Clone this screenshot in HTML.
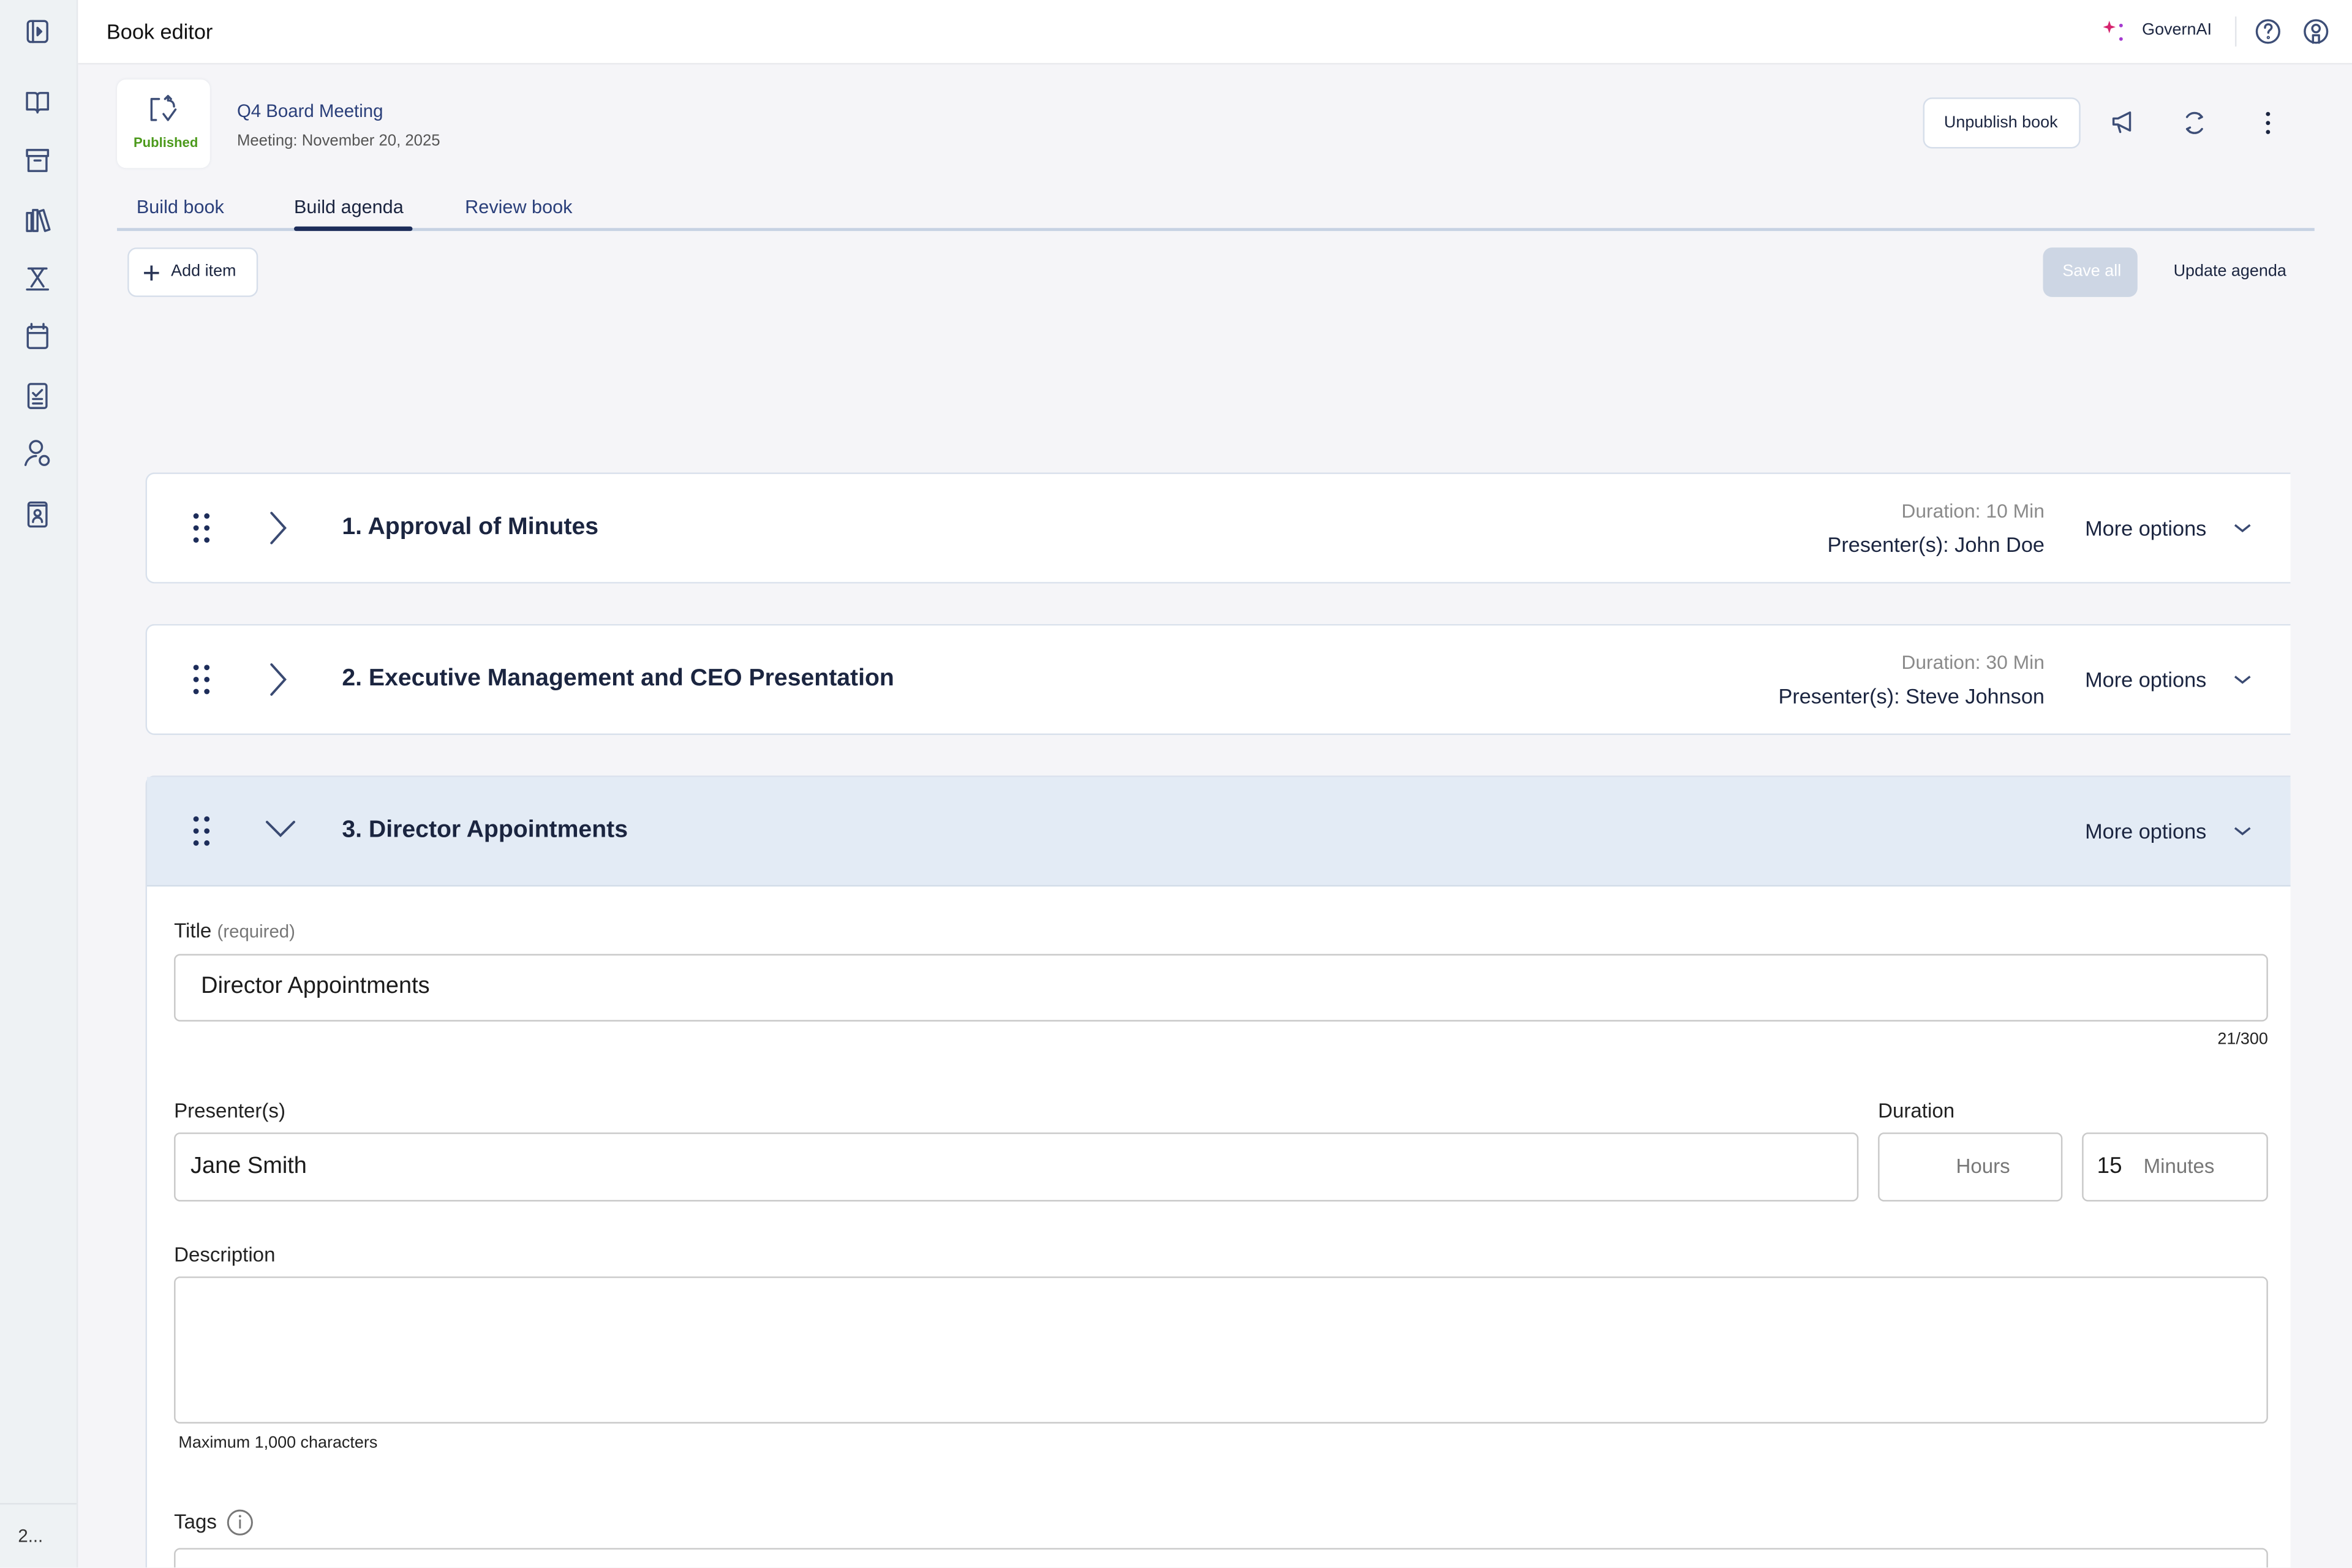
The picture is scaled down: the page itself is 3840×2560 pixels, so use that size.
<!DOCTYPE html>
<html><head><meta charset="utf-8">
<style>
html,body{margin:0;padding:0;width:3840px;height:2560px;overflow:hidden;background:#f5f5f8;}
#w{position:absolute;left:0;top:0;width:1568px;height:1045.3px;overflow:hidden;transform:scale(2.44898);transform-origin:0 0;font-family:"Liberation Sans",sans-serif;color:#1b2540;}
.a{position:absolute;}
.t{position:absolute;white-space:nowrap;}
svg{position:absolute;overflow:visible;}
.card{position:absolute;left:97px;width:1430px;background:#fff;border:1.5px solid #d9e1ec;border-right:none;border-radius:6px 0 0 6px;box-sizing:border-box;}
.inp{position:absolute;border:1.5px solid #c9c9c9;border-radius:4px;background:#fff;box-sizing:border-box;}
.ic{stroke:#3d4e77;stroke-width:1.4;fill:none;stroke-linecap:round;stroke-linejoin:round;}
</style></head><body><div id="w">
<div class="a" style="left:0;top:0;width:51px;height:1046px;background:#eef2f4;border-right:1px solid #e6e9ec"></div>
<div class="a" style="left:0;top:1002px;width:51px;height:1px;background:#dfe3e7"></div>
<div class="t" style="left:12px;top:1017px;font-size:12px;color:#333">2...</div>
<svg width="51" height="400" style="left:0;top:0">
 <g class="ic">
  <rect x="18.5" y="14" width="13" height="14" rx="2"/><line x1="22" y1="14" x2="22" y2="28"/><path d="M25 18.5l2.5 2.5-2.5 2.5z" fill="#3d4e77"/>
  <path d="M18 62h5c1.5 0 2 1 2 2v11c0-1-1-2-2-2h-5zM32 62h-5c-1.5 0-2 1-2 2v11c0-1 1-2 2-2h5z"/>
  <rect x="18" y="100" width="14" height="4"/><rect x="19" y="104" width="12" height="10"/><line x1="23" y1="107" x2="27" y2="107"/>
  <path d="M18 154v-12h3v12zM22 154v-14h3v14zM26 141l3-1 4 13-3 1z"/>
  <path d="M19 179h12M21 179l4 6-4 6M29 179l-4 6 4 6M18 193h14"/>
  <rect x="18.5" y="218" width="13" height="14" rx="1.5"/><line x1="18.5" y1="222" x2="31.5" y2="222"/><line x1="21" y1="216" x2="21" y2="219"/><line x1="29" y1="216" x2="29" y2="219"/>
  <rect x="19" y="256" width="12" height="16" rx="1.5"/><path d="M22 262l2 2 4-4M22 266h6M22 269h6"/>
  <circle cx="24" cy="298" r="4"/><path d="M17 310c1-4 4-6 7-6"/><circle cx="29.5" cy="307" r="3"/>
  <rect x="19" y="335" width="12" height="16" rx="1.5"/><circle cx="25" cy="342" r="2"/><path d="M22 348c0-2 1.5-3 3-3s3 1 3 3M19 337h12"/>
 </g>
</svg>
<div class="a" style="left:52px;top:0;width:1516px;height:42px;background:#fff;border-bottom:1px solid #e8e9ed"></div>
<div class="t" style="left:71px;top:13px;font-size:14px;color:#111">Book editor</div>
<svg width="20" height="20" style="left:1400px;top:11px"><path d="M6 4l1.5 4.5L12 10l-4.5 1.5L6 16l-1.5-4.5L0 10l4.5-1.5z" fill="#d6246e" transform="translate(2,0) scale(0.7)"/><circle cx="14" cy="6" r="1.2" fill="#a43ad0"/><circle cx="14" cy="15" r="1.2" fill="#a43ad0"/></svg>
<div class="t" style="left:1428px;top:14px;font-size:11px;color:#1b2540">GovernAI</div>
<div class="a" style="left:1490px;top:11px;width:1px;height:20px;background:#e3e5ea"></div>
<svg width="60" height="24" style="left:1502px;top:10px"><g class="ic"><circle cx="10" cy="11" r="7.5"/><path d="M8 8.5c0-1.5 1-2.3 2.2-2.3s2.2.8 2.2 2c0 1.8-2.2 1.8-2.2 3.6"/><circle cx="10.2" cy="15" r=".4"/><circle cx="42" cy="11" r="7.5"/><circle cx="42" cy="9" r="2.5"/><path d="M40 18.5v-5h4v5"/></g></svg>
<div class="a" style="left:78px;top:53px;width:62px;height:59px;background:#fff;border-radius:6px;box-shadow:0 0 2px #e2e5ea"></div>
<svg width="24" height="24" style="left:98px;top:62px"><g class="ic" stroke-width="1.2"><path d="M8 4H3v14h3M12 4l2-2 2 2M14 2v3c3 0 4 2 4 4M11 14l3 4 5-7"/></g></svg>
<div class="t" style="left:89px;top:90px;font-size:9px;color:#4c9a1c;font-weight:bold">Published</div>
<div class="t" style="left:158px;top:67px;font-size:12px;color:#2a3f7a">Q4 Board Meeting</div>
<div class="t" style="left:158px;top:88px;font-size:10.5px;color:#555">Meeting: November 20, 2025</div>
<div class="a" style="left:1282px;top:65px;width:105px;height:34px;background:#fff;border:1px solid #d6deea;border-radius:6px;box-sizing:border-box"></div>
<div class="t" style="left:1296px;top:76px;font-size:11px;color:#1b2540">Unpublish book</div>
<svg width="120" height="24" style="left:1405px;top:70px"><g class="ic"><path d="M4 9h3l8-4v12l-8-4H4zM7 13l1.5 5"/><path d="M53 8a6 6 0 0 1 10 0M63 16a6 6 0 0 1-10 0M61 6l2 2-2 1M55 18l-2-2 2-1"/></g><circle cx="107" cy="6" r="1.4" fill="#1b2540"/><circle cx="107" cy="12" r="1.4" fill="#1b2540"/><circle cx="107" cy="18" r="1.4" fill="#1b2540"/></svg>
<div class="t" style="left:91px;top:131px;font-size:12.5px;color:#2a3f7a">Build book</div>
<div class="t" style="left:196px;top:131px;font-size:12.5px;color:#1b2540">Build agenda</div>
<div class="t" style="left:310px;top:131px;font-size:12.5px;color:#2a3f7a">Review book</div>
<div class="a" style="left:78px;top:152px;width:1465px;height:1.5px;background:#c6d2e3"></div>
<div class="a" style="left:196px;top:151px;width:79px;height:3px;background:#1d2d5a;border-radius:2px"></div>
<div class="a" style="left:85px;top:165px;width:87px;height:33px;background:#fff;border:1px solid #d6deea;border-radius:6px;box-sizing:border-box"></div>
<svg width="12" height="12" style="left:95px;top:176px"><path d="M6 1v10M1 6h10" stroke="#2a3556" stroke-width="1.5"/></svg>
<div class="t" style="left:114px;top:175px;font-size:11px;color:#1b2540">Add item</div>
<div class="a" style="left:1362px;top:165px;width:63px;height:33px;background:#cdd6e4;border-radius:6px"></div>
<div class="t" style="left:1375px;top:175px;font-size:11px;color:#fff">Save all</div>
<div class="t" style="left:1449px;top:175px;font-size:11px;color:#1b2540">Update agenda</div>
<div class="card" style="top:315px;height:74px"></div>
<div class="card" style="top:416px;height:74px"></div>
<div class="card" style="top:517px;height:560px;background:#fff"></div>
<div class="a" style="left:98px;top:518px;width:1429px;height:72px;background:#e3ebf5;border-bottom:1.5px solid #d3dde9"></div>
<svg width="100" height="300" style="left:120px;top:330px"><g fill="#1d2d5a">
 <circle cx="10.7" cy="14" r="1.8"/><circle cx="17.9" cy="14" r="1.8"/><circle cx="10.7" cy="22" r="1.8"/><circle cx="17.9" cy="22" r="1.8"/><circle cx="10.7" cy="30" r="1.8"/><circle cx="17.9" cy="30" r="1.8"/>
 <circle cx="10.7" cy="115" r="1.8"/><circle cx="17.9" cy="115" r="1.8"/><circle cx="10.7" cy="123" r="1.8"/><circle cx="17.9" cy="123" r="1.8"/><circle cx="10.7" cy="131" r="1.8"/><circle cx="17.9" cy="131" r="1.8"/>
 <circle cx="10.7" cy="216" r="1.8"/><circle cx="17.9" cy="216" r="1.8"/><circle cx="10.7" cy="224" r="1.8"/><circle cx="17.9" cy="224" r="1.8"/><circle cx="10.7" cy="232" r="1.8"/><circle cx="17.9" cy="232" r="1.8"/></g>
 <g stroke="#3a4a72" stroke-width="1.6" fill="none" stroke-linecap="round"><path d="M61 12l9 10-9 10M61 113l9 10-9 10M58 218l9 9 9-9"/></g>
</svg>
<div class="t" style="left:228px;top:343px;font-size:16px;font-weight:bold;color:#1b2540">1. Approval of Minutes</div>
<div class="t" style="left:228px;top:444px;font-size:16px;font-weight:bold;color:#1b2540">2. Executive Management and CEO Presentation</div>
<div class="t" style="left:228px;top:545px;font-size:16px;font-weight:bold;color:#1b2540">3. Director Appointments</div>
<div class="t" style="right:205px;top:333px;font-size:13px;color:#8a8a8a">Duration: 10 Min</div>
<div class="t" style="right:205px;top:355px;font-size:14px;color:#1b2540">Presenter(s): John Doe</div>
<div class="t" style="right:205px;top:434px;font-size:13px;color:#8a8a8a">Duration: 30 Min</div>
<div class="t" style="right:205px;top:456px;font-size:14px;color:#1b2540">Presenter(s): Steve Johnson</div>
<div class="t" style="left:1390px;top:344px;font-size:14px;color:#1b2540">More options</div>
<div class="t" style="left:1390px;top:445px;font-size:14px;color:#1b2540">More options</div>
<div class="t" style="left:1390px;top:546px;font-size:14px;color:#1b2540">More options</div>
<svg width="14" height="260" style="left:1488px;top:340px"><g stroke="#3a4a72" stroke-width="1.4" fill="none"><path d="M2 10l5 4 5-4M2 111l5 4 5-4M2 212l5 4 5-4"/></g></svg>
<div class="t" style="left:116px;top:613px;font-size:13.5px;color:#222">Title <span style="font-size:12px;color:#777">(required)</span></div>
<div class="inp" style="left:116px;top:636px;width:1396px;height:45px"></div>
<div class="t" style="left:134px;top:649px;font-size:15.5px;color:#1b1b1b">Director Appointments</div>
<div class="t" style="right:56px;top:687px;font-size:11px;color:#222">21/300</div>
<div class="t" style="left:116px;top:733px;font-size:13.5px;color:#222">Presenter(s)</div>
<div class="inp" style="left:116px;top:755px;width:1123px;height:46px"></div>
<div class="t" style="left:127px;top:769px;font-size:15.5px;color:#1b1b1b">Jane Smith</div>
<div class="t" style="left:1252px;top:733px;font-size:13.5px;color:#222">Duration</div>
<div class="inp" style="left:1252px;top:755px;width:123px;height:46px"></div>
<div class="t" style="left:1304px;top:770px;font-size:13.5px;color:#777">Hours</div>
<div class="inp" style="left:1388px;top:755px;width:124px;height:46px"></div>
<div class="t" style="left:1398px;top:769px;font-size:15px;color:#1b1b1b">15</div>
<div class="t" style="left:1429px;top:770px;font-size:13.5px;color:#777">Minutes</div>
<div class="t" style="left:116px;top:829px;font-size:13.5px;color:#222">Description</div>
<div class="inp" style="left:116px;top:851px;width:1396px;height:98px"></div>
<div class="t" style="left:119px;top:956px;font-size:11px;color:#222">Maximum 1,000 characters</div>
<div class="t" style="left:116px;top:1007px;font-size:13.5px;color:#222">Tags</div>
<svg width="20" height="20" style="left:150px;top:1005px"><circle cx="10" cy="10" r="8" fill="none" stroke="#777" stroke-width="1.2"/><path d="M10 8v6" stroke="#777" stroke-width="1.2"/><circle cx="10" cy="5.8" r=".8" fill="#777"/></svg>
<div class="inp" style="left:116px;top:1032px;width:1396px;height:40px"></div>
</div></body></html>
